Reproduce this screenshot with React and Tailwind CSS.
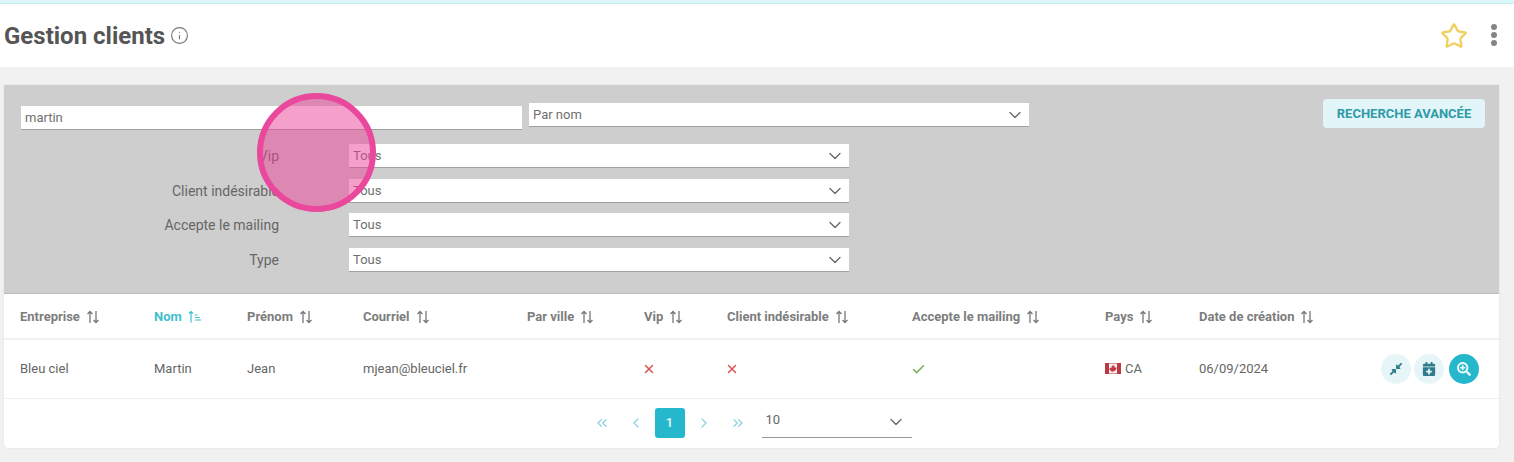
import React from 'react';
import { Star, Info, ChevronDown, ChevronLeft, ChevronRight, ChevronsLeft, ChevronsRight, X, Check } from 'lucide-react';
import { FaCompressAlt, FaCalendarPlus, FaSearchPlus } from 'react-icons/fa';

const gridCols = 'grid grid-cols-[134px_93px_116px_164px_117px_83px_185px_193px_94px_1fr] pl-4 items-center';

function SortIcon() {
    return (
        <svg viewBox="0 0 14 14" className="w-[14px] h-[14px] ml-[6px] mt-[1px] text-[#777]" fill="none" stroke="currentColor" strokeWidth="1.3">
            <path d="M4 13V1.500M1.500 4L4 1.500 6.500 4" />
            <path d="M10 1v11.500M7.500 10L10 12.500 12.500 10" />
        </svg>
    );
}

function SortActiveIcon() {
    return (
        <svg viewBox="0 0 14 14" className="w-[14px] h-[14px] ml-[6px] mt-[1px] text-[#3fc0cf]" fill="none" stroke="currentColor" strokeWidth="1.2">
            <path d="M3 12.500V1.500M1 3.500L3 1.500 5 3.500" />
            <path d="M7 5h2.500M7 7.500h4.500M7 10h6" />
        </svg>
    );
}

function Flag() {
    return (
        <svg viewBox="0 0 16 11" className="w-4 h-[11px] mr-1 -mt-[2px]">
            <rect width="16" height="11" fill="#b93a44" />
            <rect x="4" y="0.500" width="8" height="10" fill="#f7f0f0" />
            <path d="M8 1.500l.8 1.500.8-.4-.3 2 1-.6.3.7 1-.2-.4 1.300.4.300-1.800 1.300.2.700-1.700-.2V9h-.6v-.6l-1.700.2.2-.7-1.800-1.300.4-.3-.4-1.300 1 .2.300-.7 1 .6-.3-2 .8.4z" fill="#c8343f" />
        </svg>
    );
}

function Select({ label, className }) {
    return (
        <div className={`flex items-center justify-between bg-white border-b border-[#a0a0a0] pl-1 pr-[4px] text-[13px] text-[#707070] ${className}`}>
            <span>{label}</span>
            <ChevronDown className="w-5 h-5 text-[#666]" strokeWidth={1.5} />
        </div>
    );
}

function FilterRow({ label, className }) {
    return (
        <div className={`flex items-center ${className}`}>
            <label className="w-[275px] text-right text-sm text-[#666]">{label}</label>
            <Select label="Tous" className="ml-[70px] w-[500px] h-[24px]" />
        </div>
    );
}

function Header({ children, active }) {
    return (
        <div className={`flex items-center pt-[1px] text-[13px] font-bold ${active ? 'text-[#3fc0cf]' : 'text-[#7d7d7d]'}`}>
            {children}
            {active ? <SortActiveIcon /> : <SortIcon />}
        </div>
    );
}

export default function App() {
    return (
        <div className="relative w-[1514px] h-[462px] overflow-hidden bg-[#f1f1f1] font-['Roboto',sans-serif]">
            {/* Top line */}
            <div className="h-1 bg-[#dbf7fa] border-b border-[#c4eef2]" />

            {/* Title bar */}
            <header className="h-[63px] bg-white flex items-center justify-between pl-1 pr-[17px]">
                <div className="flex items-center">
                    <h1 className="text-[24px] font-bold text-[#555]">Gestion clients</h1>
                    <Info className="w-[19px] h-[19px] ml-[5px] text-[#777]" strokeWidth={1.4} />
                </div>
                <div className="flex items-center">
                    <Star className="w-[28px] h-[28px] text-[#f0d060]" strokeWidth={2} />
                    <div className="ml-[23px] -mt-[2px] flex flex-col gap-[2px]">
                        <span className="w-[6px] h-[6px] rounded-full bg-[#858585]" />
                        <span className="w-[6px] h-[6px] rounded-full bg-[#858585]" />
                        <span className="w-[6px] h-[6px] rounded-full bg-[#858585]" />
                    </div>
                </div>
            </header>

            {/* Card */}
            <main className="mt-[18px] ml-1 w-[1495px] h-[363px] bg-white rounded-b-sm shadow-[0_0_2px_rgba(0,0,0,0.1)]">
                {/* Filters */}
                <section className="relative h-[209px] bg-[#cecece] border-b border-[#bdbdbd] pt-[18px]">
                    <div className="flex items-start justify-between pr-[14px]">
                        <div className="flex items-start pl-[17px]">
                            <div className="mt-[3px] w-[501px] h-[24px] bg-white border-b border-[#a0a0a0] pl-1 flex items-center text-[13px] text-[#707070]">martin</div>
                            <Select label="Par nom" className="ml-[7px] w-[500px] h-[24px]" />
                        </div>
                        <button className="-mt-1 w-[162px] h-[29px] rounded bg-[#e2f6f9] text-[#2f9aa8] text-[13px] font-bold">RECHERCHE AVANCÉE</button>
                    </div>
                    <FilterRow label="Vip" className="mt-[14px]" />
                    <FilterRow label="Client indésirable" className="mt-[11px]" />
                    <FilterRow label="Accepte le mailing" className="mt-[10px]" />
                    <FilterRow label="Type" className="mt-[11px]" />
                </section>

                {/* Table */}
                <div className={`${gridCols} h-[46px] border-b-2 border-[#f0f0f0]`}>
                    <Header>Entreprise</Header>
                    <Header active>Nom</Header>
                    <Header>Prénom</Header>
                    <Header>Courriel</Header>
                    <Header>Par ville</Header>
                    <Header>Vip</Header>
                    <Header>Client indésirable</Header>
                    <Header>Accepte le mailing</Header>
                    <Header>Pays</Header>
                    <Header>Date de création</Header>
                </div>
                <div className={`${gridCols} h-[59px] border-b border-[#eeeeee] text-[13px] text-[#666]`}>
                    <span>Bleu ciel</span>
                    <span>Martin</span>
                    <span>Jean</span>
                    <span>mjean@bleuciel.fr</span>
                    <span />
                    <X className="w-[14px] h-[14px] -ml-[2px] text-[#d9534f]" strokeWidth={2.5} />
                    <X className="w-[14px] h-[14px] -ml-[2px] text-[#d9534f]" strokeWidth={2.5} />
                    <Check className="w-[15px] h-[15px] -ml-[1px] text-[#7fb25a]" strokeWidth={2.5} />
                    <span className="flex items-center"><Flag />CA</span>
                    <div className="flex items-center justify-between pr-5">
                        <span>06/09/2024</span>
                        <div className="flex items-center gap-[3px]">
                            <span className="w-[30px] h-[30px] rounded-full bg-[#e6f5f7] flex items-center justify-center"><FaCompressAlt className="w-[14px] h-[14px] text-[#2f7d8a]" /></span>
                            <span className="w-[30px] h-[30px] rounded-full bg-[#e6f5f7] flex items-center justify-center"><FaCalendarPlus className="w-[14px] h-[14px] text-[#2f7d8a]" /></span>
                            <span className="ml-[2px] w-[30px] h-[30px] rounded-full bg-[#25b7cb] flex items-center justify-center"><FaSearchPlus className="w-[14px] h-[14px] text-[#e8fafc]" /></span>
                        </div>
                    </div>
                </div>

                {/* Pagination */}
                <div className="h-[49px] pb-[2px] flex items-center justify-center text-[#8fd5e0] pl-[2px]">
                    <ChevronsLeft className="w-4 h-4" strokeWidth={2} />
                    <ChevronLeft className="w-4 h-4 ml-[18px]" strokeWidth={2} />
                    <span className="ml-[11px] w-[30px] h-[30px] rounded-[3px] bg-[#25b7cb] text-[#e8fafc] text-[13px] font-medium flex items-center justify-center">1</span>
                    <ChevronRight className="w-4 h-4 ml-[11px]" strokeWidth={2} />
                    <ChevronsRight className="w-4 h-4 ml-[18px]" strokeWidth={2} />
                    <div className="ml-4 w-[150px] h-[30px] pt-[2px] border-b border-[#999] flex items-start justify-between pl-1 pr-[6px] text-[13px] text-[#666]">
                        <span>10</span>
                        <ChevronDown className="w-5 h-5 mt-[2px] text-[#666]" strokeWidth={1.5} />
                    </div>
                </div>
            </main>

            {/* Click highlight */}
            <div className="absolute left-[257px] top-[93px] w-[119px] h-[119px] rounded-full border-[6px] border-[#e9489c] bg-[#eb4197]/50" />
        </div>
    );
}
